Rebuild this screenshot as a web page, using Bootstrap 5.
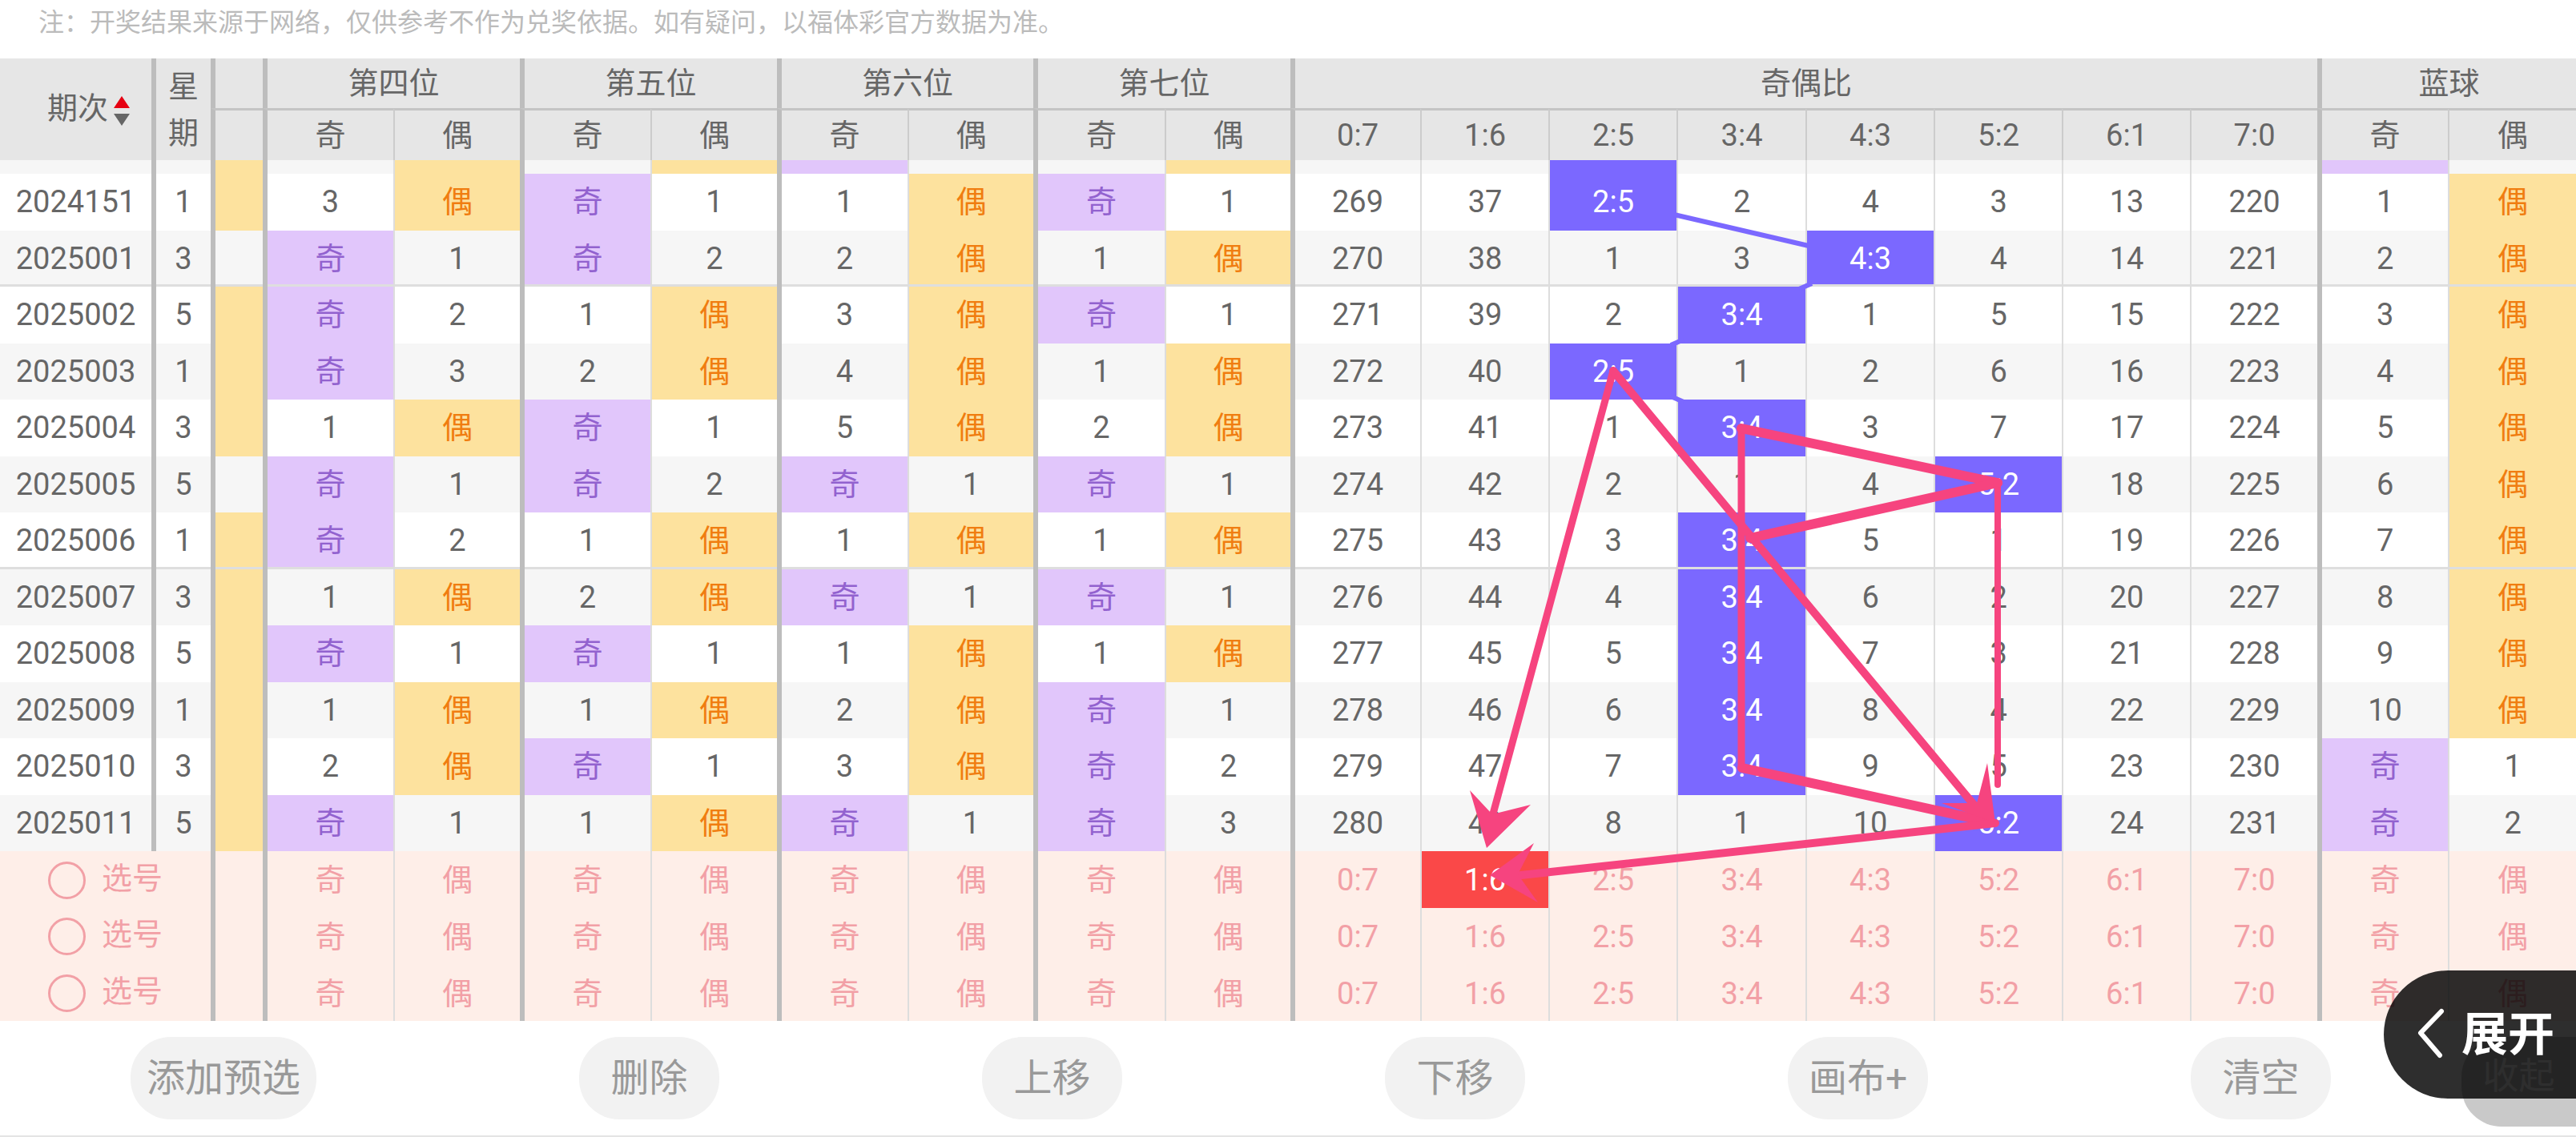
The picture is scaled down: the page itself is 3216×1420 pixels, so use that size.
<!DOCTYPE html>
<html lang="zh">
<head>
<meta charset="UTF-8">
<title>奇偶比走势</title>
<link href="https://cdn.jsdelivr.net/npm/bootstrap@5.3.0/dist/css/bootstrap.min.css" rel="stylesheet">
<style>
html, body { width: 3216px; height: 1420px; overflow: hidden; background: #fff; }
body { position: relative; font-family: Roboto, "Noto Sans CJK SC", sans-serif; color: #666; }
.note-line { height: 73px; padding: 8px 0 0 48px; font-size: 32px; line-height: 40px; color: #bbb; }
.trend { table-layout: fixed; width: 3216px; margin: 0; border-collapse: separate; border-spacing: 0; font-size: 38px; --bs-table-bg: transparent; }
.trend th, .trend td { padding: 0; border: 0; text-align: center; vertical-align: middle; font-weight: 400; color: #666; line-height: 1; border-left: 2px solid #ddd; white-space: nowrap; overflow: hidden; }
.trend thead th { background: #e6e6e6; border-left-color: #ccc; }
.trend thead tr.top-head th { height: 62px; }
.trend thead tr.sub-head th { height: 65px; border-top: 3px solid #c4c4c4; }
.trend .gs, .trend thead th.gs { border-left: 6px solid #bdbdbd; }
.trend .first, .trend thead th.first { border-left: 0; }
.trend thead th.period-head { padding-left: 32px; }
.trend thead th.week-head { white-space: normal; line-height: 58px; }
.trend tbody tr.stub td { height: 17px; font-size: 0; background: #f6f6f6; }
.trend tbody tr.draw td { height: 70.5px; }
.trend tbody tr.alt td { background: #f6f6f6; }
.trend tbody tr.line td { box-shadow: inset 0 -3px 0 #dedede; }
.trend tbody tr td.odd { background: #e1c6fb; color: #9262cf; }
.trend tbody tr td.even { background: #fde29e; color: #f07d10; }
.trend tbody tr td.pick { background: #7b68ff; color: #fff; }
.trend tfoot td { height: 70.67px; background: #feeee8; color: #f2a0a6; padding-top: 2px; }
.trend tfoot td.hit { background: #fa4848; color: #fff; }
.sort-mark { display: inline-flex; flex-direction: column; gap: 7px; margin-left: 7px; vertical-align: middle; }
.sort-mark i { display: block; width: 0; height: 0; border-left: 10px solid transparent; border-right: 10px solid transparent; }
.sort-mark .up { border-bottom: 15px solid #e60012; }
.sort-mark .down { border-top: 15px solid #666; }
.pick-ring { display: inline-block; width: 47px; height: 47px; border: 3px solid #f2a0a6; border-radius: 50%; margin-right: 20px; vertical-align: middle; }
.action-bar { padding: 20px 0 0 163px; gap: 328px; height: 145px; }
.action-btn { height: 103px; min-width: 175px; padding: 0 20px; border-radius: 50px; background: #f2f2f2; color: #999; font-size: 48px; line-height: 103px; text-align: center; white-space: nowrap; }
.action-btn.fold { position: absolute; left: 3073px; top: 1295px; height: 112px; line-height: 100px; background: #c9c9c9; color: #fff; width: 143px; min-width: 0; padding: 0; border-radius: 50px 0 0 50px; font-size: 45px; }
.bottom-edge { position: absolute; left: 0; right: 0; bottom: 0; height: 2px; background: #e4e4e4; }
.expand-pill { position: absolute; left: 2976px; top: 1212px; width: 240px; height: 160px; border-radius: 80px 0 0 80px; background: rgba(0,0,0,.82); color: #fff; font-size: 58px; font-weight: 700; padding-left: 97px; }
.expand-pill svg { position: absolute; left: 40px; top: 46px; }
.overlay { position: absolute; left: 0; top: 0; pointer-events: none; }
</style>
</head>
<body>

<div class="note-line">注：开奖结果来源于网络，仅供参考不作为兑奖依据。如有疑问，以福体彩官方数据为准。</div>

<table class="table trend">
    <colgroup id="cols"></colgroup>
    <thead id="head"></thead>
    <tbody id="rows"></tbody>
    <tfoot id="foot"></tfoot>
</table>

<div class="d-flex action-bar">
    <div class="action-btn">添加预选</div>
    <div class="action-btn">删除</div>
    <div class="action-btn">上移</div>
    <div class="action-btn">下移</div>
    <div class="action-btn">画布+</div>
    <div class="action-btn">清空</div>
</div>
<div class="action-btn fold">收起</div>
<div class="bottom-edge"></div>

<svg class="overlay" width="3216" height="1420" viewBox="0 0 3216 1420" fill="none">
    <!-- connecting lines between picked cells, only the parts outside the cells -->
    <g stroke="#7b68ff" stroke-width="6">
        <path d="M2090 268L2258 307"/>
        <path d="M2262 354L2246 361"/>
        <path d="M2102 424L2086 431"/>
        <path d="M2086 495L2102 502"/>
        <path d="M2254 551L2414 587"/>
        <path d="M2414 620L2254 658"/>
        <path d="M2254 976L2414 1012"/>
    </g>
    <!-- hand drawn marks -->
    <g stroke="#f6447f" stroke-linecap="round">
        <path stroke-width="9" d="M2014 463L1863 1020"/>
        <path stroke-width="10" d="M2014 463L2470 1012"/>
        <path stroke-width="9" d="M2174 535V959"/>
        <path stroke-width="8" d="M2494 603V980"/>
        <path stroke-width="12" d="M2174 535L2494 603"/>
        <path stroke-width="12" d="M2494 603L2185 672"/>
        <path stroke-width="12" d="M2175 959L2481 1026"/>
        <path stroke-width="10" d="M2491 1028L1890 1094"/>
    </g>
    <g fill="#f6447f">
        <polygon points="1856,1059 1835,987 1863,1017 1911,1005"/>
        <polygon points="2491,1028 2481,953 2468,1003 2424,1003"/>
        <polygon points="1860,1093 1915,1053 1895,1092 1920,1127"/>
    </g>
</svg>

<div class="expand-pill d-flex align-items-center">
    <svg width="40" height="68" viewBox="0 0 40 68" fill="none"><path d="M32 5L6 32L30 60" stroke="#fff" stroke-width="6" stroke-linecap="round" stroke-linejoin="round"/></svg>
    展开
</div>

<script>
    const RATIOS = ["0:7", "1:6", "2:5", "3:4", "4:3", "5:2", "6:1", "7:0"];
    const widths = [189, 74, 65, 163, 158, 163, 158, 163, 157, 164, 157, 162, 160, 160, 161, 160, 160, 160, 159, 163, 160];

    document.getElementById("cols").innerHTML = widths.map(w => `<col style="width:${w}px">`).join("");

    let topHead = `<tr class="top-head">
        <th rowspan="2" class="first period-head">期次<span class="sort-mark"><i class="up"></i><i class="down"></i></span></th>
        <th rowspan="2" class="gs week-head">星<br>期</th>
        <th class="gs"></th>`;
    ["第四位", "第五位", "第六位", "第七位"].forEach(t => { topHead += `<th colspan="2" class="gs">${t}</th>`; });
    topHead += `<th colspan="8" class="gs">奇偶比</th><th colspan="2" class="gs">蓝球</th></tr>`;

    let subHead = `<tr class="sub-head"><th class="gs"></th>`;
    for (let i = 0; i < 4; i++) subHead += `<th class="gs">奇</th><th>偶</th>`;
    RATIOS.forEach((r, i) => { subHead += `<th class="${i === 0 ? "gs" : ""}">${r}</th>`; });
    subHead += `<th class="gs">奇</th><th>偶</th></tr>`;
    document.getElementById("head").innerHTML = topHead + subHead;

    // positions and blue: n > 0 even hit (n is the odd miss), n < 0 odd hit (|n| is the even miss)
    const data = [
        { no: "2024151", wk: 1, mark: 1, pos: [3, -1, 1, -1], pick: 2, miss: [269, 37, 0, 2, 4, 3, 13, 220], blue: 1 },
        { no: "2025001", wk: 3, mark: 0, pos: [-1, -2, 2, 1], pick: 4, miss: [270, 38, 1, 3, 0, 4, 14, 221], blue: 2 },
        { no: "2025002", wk: 5, mark: 1, pos: [-2, 1, 3, -1], pick: 3, miss: [271, 39, 2, 0, 1, 5, 15, 222], blue: 3 },
        { no: "2025003", wk: 1, mark: 1, pos: [-3, 2, 4, 1], pick: 2, miss: [272, 40, 0, 1, 2, 6, 16, 223], blue: 4 },
        { no: "2025004", wk: 3, mark: 1, pos: [1, -1, 5, 2], pick: 3, miss: [273, 41, 1, 0, 3, 7, 17, 224], blue: 5 },
        { no: "2025005", wk: 5, mark: 0, pos: [-1, -2, -1, -1], pick: 5, miss: [274, 42, 2, 1, 4, 0, 18, 225], blue: 6 },
        { no: "2025006", wk: 1, mark: 1, pos: [-2, 1, 1, 1], pick: 3, miss: [275, 43, 3, 0, 5, 1, 19, 226], blue: 7 },
        { no: "2025007", wk: 3, mark: 1, pos: [1, 2, -1, -1], pick: 3, miss: [276, 44, 4, 0, 6, 2, 20, 227], blue: 8 },
        { no: "2025008", wk: 5, mark: 1, pos: [-1, -1, 1, 1], pick: 3, miss: [277, 45, 5, 0, 7, 3, 21, 228], blue: 9 },
        { no: "2025009", wk: 1, mark: 1, pos: [1, 1, 2, -1], pick: 3, miss: [278, 46, 6, 0, 8, 4, 22, 229], blue: 10 },
        { no: "2025010", wk: 3, mark: 1, pos: [2, -1, 3, -2], pick: 3, miss: [279, 47, 7, 0, 9, 5, 23, 230], blue: -1 },
        { no: "2025011", wk: 5, mark: 1, pos: [-1, 1, -1, -3], pick: 5, miss: [280, 48, 8, 1, 10, 0, 24, 231], blue: -2 }
    ];

    function pairCells(n) {
        if (n < 0) return `<td class="gs odd">奇</td><td>${-n}</td>`;
        return `<td class="gs">${n}</td><td class="even">偶</td>`;
    }

    // the row scrolled mostly out under the header
    let body = `<tr class="stub"><td class="first"></td><td class="gs"></td><td class="gs even"></td>
        <td class="gs"></td><td class="even"></td><td class="gs"></td><td class="even"></td>
        <td class="gs odd"></td><td></td><td class="gs"></td><td class="even"></td>`;
    RATIOS.forEach((r, i) => { body += `<td class="${i === 0 ? "gs" : ""}${i === 2 ? "pick" : ""}"></td>`; });
    body += `<td class="gs odd"></td><td></td></tr>`;

    data.forEach((d, i) => {
        const cls = "draw" + (i % 2 ? " alt" : "") + (i === 1 || i === 6 ? " line" : "");
        let tr = `<tr class="${cls}"><td class="first">${d.no}</td><td class="gs">${d.wk}</td><td class="gs ${d.mark ? "even" : ""}"></td>`;
        d.pos.forEach(n => { tr += pairCells(n); });
        d.miss.forEach((v, r) => {
            const c = r === 0 ? "gs" : "";
            tr += r === d.pick ? `<td class="${c} pick">${RATIOS[r]}</td>` : `<td class="${c}">${v}</td>`;
        });
        body += tr + pairCells(d.blue) + "</tr>";
    });
    document.getElementById("rows").innerHTML = body;

    let foot = "";
    for (let i = 0; i < 3; i++) {
        foot += `<tr><td colspan="2" class="first"><span class="pick-ring"></span>选号</td><td class="gs"></td>`;
        for (let p = 0; p < 4; p++) foot += `<td class="gs">奇</td><td>偶</td>`;
        RATIOS.forEach((r, k) => { foot += `<td class="${k === 0 ? "gs " : ""}${i === 0 && k === 1 ? "hit" : ""}">${r}</td>`; });
        foot += `<td class="gs">奇</td><td>偶</td></tr>`;
    }
    document.getElementById("foot").innerHTML = foot;
</script>

<script src="https://cdn.jsdelivr.net/npm/bootstrap@5.3.0/dist/js/bootstrap.bundle.min.js"></script>
</body>
</html>
